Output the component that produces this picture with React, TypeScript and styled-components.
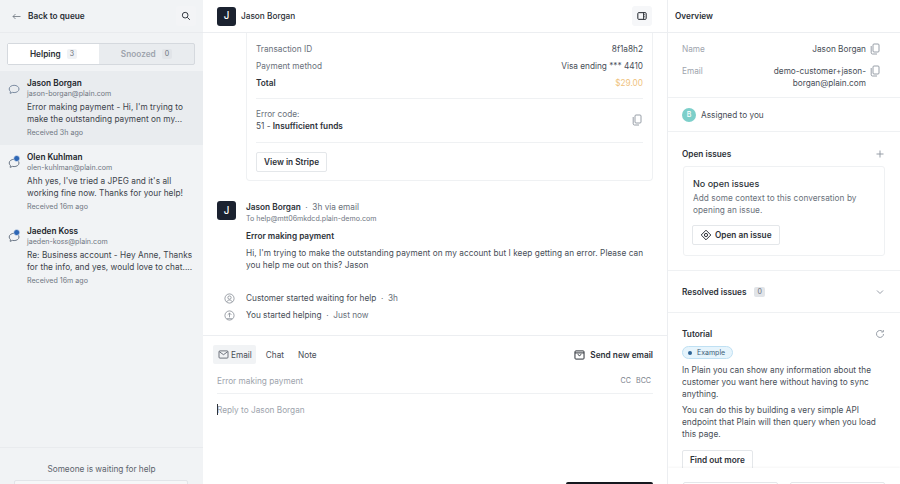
import React from "react";
import styled, { createGlobalStyle } from "styled-components";

const Global = createGlobalStyle`
  html, body { margin: 0; padding: 0; height: 484px; overflow: hidden; background: #fff; }
  body { font-family: Inter, "Liberation Sans", sans-serif; font-size: 8.25px; line-height: 12px; color: #2d3239; }
  * { box-sizing: border-box; }
  #root { height: 484px; }
`;

const Page = styled.div`
  display: grid;
  grid-template-columns: 203px 465px 232px;
  height: 484px;
  overflow: hidden;
`;

/* ---------- left ---------- */
const Left = styled.aside`
  background: #f1f3f5;
  display: flex;
  flex-direction: column;
  height: 484px;
`;
const LeftHeader = styled.div`
  height: 33px;
  flex: none;
  display: flex;
  align-items: center;
  padding: 0 7px 0 12px;
  gap: 7px;
  border-bottom: 1px solid #e9ebee;
  font-weight: 600;
  font-size: 8.25px;
  color: #2a2f36;
`;
const IconBtn = styled.div<{ $tone: string }>`
  width: 20px;
  height: 20px;
  margin-left: auto;
  display: flex;
  align-items: center;
  justify-content: center;
  border-radius: 3px;
  background: ${(p) => p.$tone};
  color: #343a42;
`;
const Tabs = styled.div`
  margin: 10px 8px 6px 7px;
  height: 22px;
  display: grid;
  grid-template-columns: 91px 1fr;
  border: 1px solid #d5d9de;
  border-radius: 2px;
  background: #e9ecef;
  flex: none;
`;
const Tab = styled.div<{ $active?: boolean }>`
  display: flex;
  align-items: center;
  justify-content: center;
  gap: 6px;
  font-weight: 600;
  font-size: 8.25px;
  color: ${(p) => (p.$active ? "#2a2f36" : "#9ea4ad")};
  background: ${(p) => (p.$active ? "#fff" : "transparent")};
`;
const Count = styled.span<{ $active?: boolean }>`
  min-width: 10px;
  height: 10px;
  padding: 0 3px;
  border-radius: 2px;
  display: inline-flex;
  align-items: center;
  justify-content: center;
  font-size: 7px;
  font-weight: 400;
  background: ${(p) => (p.$active ? "#f0f2f5" : "#e1e4e8")};
  color: #6a717b;
`;
const List = styled.div`
  flex: 1;
`;
const Item = styled.div<{ $selected?: boolean }>`
  height: 74px;
  padding: 6px 8px 0 27px;
  position: relative;
  background: ${(p) => (p.$selected ? "#e9ecef" : "transparent")};
`;
const ItemIcon = styled.svg`
  position: absolute;
  left: 8px;
  top: 12px;
  overflow: visible;
`;
const ItemName = styled.div`
  font-weight: 600;
  font-size: 8.25px;
  line-height: 12px;
  color: #22262c;
`;
const ItemEmail = styled.div`
  font-size: 7.1px;
  line-height: 10px;
  color: #6f7681;
  margin-bottom: 2px;
`;
const ItemText = styled.div`
  font-size: 8.25px;
  line-height: 12px;
  color: #3d434b;
  letter-spacing: 0.05px;
  white-space: nowrap;
`;
const ItemTime = styled.div`
  font-size: 7.1px;
  line-height: 13px;
  margin-top: 1px;
  color: #6f7681;
`;
const LeftFooter = styled.div`
  height: 37px;
  flex: none;
  border-top: 1px solid #e9ebee;
  padding-top: 15px;
  position: relative;
  text-align: center;
  font-size: 8.25px;
  color: #5d636d;
`;
const WaitButton = styled.div`
  position: absolute;
  left: 14px;
  right: 15px;
  top: 32px;
  height: 20px;
  background: #f6f7f8;
  border: 1px solid #e2e5e9;
  border-radius: 2px;
`;

/* ---------- main ---------- */
const Main = styled.main`
  display: flex;
  flex-direction: column;
  height: 484px;
  border-right: 1px solid #eceef1;
`;
const MainHeader = styled.div`
  height: 33px;
  flex: none;
  display: flex;
  align-items: center;
  gap: 5px;
  padding: 0 15px 0 14px;
  border-bottom: 1px solid #eceef1;
  font-weight: 500;
  font-size: 8.25px;
  color: #2a2f36;
`;
const Avatar = styled.div`
  width: 19px;
  height: 19px;
  flex: none;
  border-radius: 3px;
  background: #1b2230;
  color: #fff;
  display: flex;
  align-items: center;
  justify-content: center;
  font-weight: 500;
  font-size: 9.75px;
`;
const Feed = styled.div`
  height: 303px;
  flex: none;
  overflow: hidden;
  border-bottom: 1px solid #eceef1;
  padding: 0 14px;
`;
const Card = styled.div`
  margin-left: 29px;
  height: 148px;
  border: 1px solid #eff1f3;
  border-top: 0;
  border-radius: 0 0 4px 4px;
  padding: 8px 9px 0;
`;
const KV = styled.div`
  display: flex;
  justify-content: space-between;
  height: 17px;
  line-height: 17px;
  font-size: 8.25px;
  color: #6a717b;
`;
const KVValue = styled.span<{ $accent?: boolean }>`
  color: ${(p) => (p.$accent ? "#efc27d" : "#484e57")};
`;
const KVTotal = styled.span`
  font-weight: 600;
  color: #2d3239;
`;
const ErrorBlock = styled.div`
  margin-top: 6px;
  padding: 9px 0 10px;
  border-top: 1px solid #eff1f3;
  border-bottom: 1px solid #eff1f3;
  display: flex;
  justify-content: space-between;
  align-items: center;
  font-size: 8.25px;
  color: #6a717b;
`;
const ErrorLine = styled.div`
  color: #484e57;
  b { font-weight: 600; color: #2d3239; }
`;
const Ghost = styled.div`
  display: inline-flex;
  align-items: center;
  justify-content: center;
  gap: 3px;
  height: 20px;
  padding: 0 7px;
  border: 1px solid #e4e7ea;
  border-radius: 2px;
  background: #fff;
  font-weight: 600;
  font-size: 8.25px;
  color: #2d3239;
  white-space: nowrap;
`;
const StripeBtn = styled(Ghost)`
  margin-top: 9px;
`;
const Message = styled.div`
  display: flex;
  gap: 10px;
  margin-top: 20px;
`;
const MsgBody = styled.div`
  flex: 1;
`;
const MsgHead = styled.div`
  font-size: 8.25px;
  color: #6a717b;
  b { font-weight: 600; color: #2d3239; }
`;
const MsgTo = styled.div`
  font-size: 7.1px;
  line-height: 12px;
  color: #6f7681;
`;
const MsgTitle = styled.div`
  font-weight: 600;
  font-size: 8.25px;
  margin-top: 5px;
  color: #2d3239;
`;
const MsgText = styled.div`
  margin-top: 5px;
  font-size: 8.25px;
  color: #484e57;
  letter-spacing: 0.05px;
`;
const Events = styled.div`
  margin-top: 21px;
  display: flex;
  flex-direction: column;
  gap: 5px;
`;
const EventRow = styled.div`
  display: flex;
  align-items: center;
  height: 12px;
  font-size: 8.25px;
  color: #484e57;
  svg { margin: 0 11px 0 7px; color: #7a818b; }
  span { color: #6a717b; }
`;
const Composer = styled.div`
  flex: 1;
  padding: 9px 14px 0 10px;
  position: relative;
  overflow: hidden;
`;
const ComposerTabs = styled.div`
  display: flex;
  align-items: center;
  height: 19px;
  font-size: 8.25px;
  color: #484e57;
`;
const ComposerTab = styled.div<{ $active?: boolean }>`
  display: flex;
  align-items: center;
  gap: 2px;
  height: 19px;
  padding: 0 4px 0 5px;
  margin-right: 5px;
  border-radius: 2px;
  background: ${(p) => (p.$active ? "#f1f3f5" : "transparent")};
`;
const SendNew = styled.div`
  margin-left: auto;
  display: flex;
  align-items: center;
  gap: 5px;
  font-weight: 600;
  color: #2d3239;
`;
const Subject = styled.div`
  margin: 2px 0 0 4px;
  height: 28px;
  border-bottom: 1px solid #eff1f3;
  display: flex;
  align-items: center;
  justify-content: space-between;
  font-size: 8.25px;
  color: #9ea4ad;
  padding-top: 3px;
`;
const CcBcc = styled.div`
  display: flex;
  gap: 5px;
  font-size: 7.1px;
  color: #7a818b;
  padding-right: 2px;
`;
const Reply = styled.div`
  margin: 10px 0 0 4px;
  font-size: 8.25px;
  color: #9ea4ad;
  position: relative;
  &::before {
    content: "";
    position: absolute;
    left: 0;
    top: 0;
    width: 1px;
    height: 11px;
    background: #2d3239;
  }
`;
const Send = styled.div`
  position: absolute;
  right: 14px;
  top: 146px;
  width: 87px;
  height: 20px;
  border-radius: 2px;
  background: #15191f;
`;

/* ---------- right ---------- */
const Right = styled.aside`
  display: flex;
  flex-direction: column;
  height: 484px;
  overflow: hidden;
  position: relative;
`;
const RightHeader = styled.div`
  height: 33px;
  flex: none;
  display: flex;
  align-items: center;
  padding-left: 7px;
  border-bottom: 1px solid #eceef1;
  font-weight: 600;
  font-size: 8.25px;
  color: #2a2f36;
`;
const Section = styled.div<{ $h: number; $top?: number; $last?: boolean }>`
  height: ${(p) => p.$h}px;
  flex: none;
  padding: ${(p) => p.$top ?? 0}px 15px 0 14px;
  border-bottom: ${(p) => (p.$last ? "0" : "1px solid #eff1f3")};
`;
const FieldSection = styled(Section)`
  padding-right: 19px;
`;
const Field = styled.div`
  display: flex;
  gap: 3px;
  font-size: 8.25px;
  color: #9ea4ad;
  margin-bottom: 10px;
`;
const FieldValue = styled.div`
  margin-left: auto;
  width: 102px;
  text-align: right;
  color: #484e57;
`;
const CopyWrap = styled.div`
  display: flex;
  width: 12px;
  flex: none;
  color: #8d949e;
`;
const Assigned = styled.div`
  height: 100%;
  display: flex;
  align-items: center;
  gap: 5px;
  font-size: 8.25px;
  color: #484e57;
`;
const Dot = styled.div`
  width: 14px;
  height: 14px;
  border-radius: 50%;
  background: #7ccfca;
  color: #fff;
  font-size: 7px;
  font-weight: 500;
  display: flex;
  align-items: center;
  justify-content: center;
`;
const SecHead = styled.div`
  display: flex;
  align-items: center;
  justify-content: space-between;
  height: 12px;
  font-weight: 600;
  font-size: 8.25px;
  color: #2d3239;
  svg { color: #8d949e; }
`;
const SecTitle = styled.div`
  display: flex;
  align-items: center;
  gap: 8px;
`;
const IssueBox = styled.div`
  margin: 6px 0 0 1px;
  height: 90px;
  border: 1px solid #eff1f3;
  border-radius: 3px;
  padding: 10px 9px 0 8px;
`;
const IssueTitle = styled.div`
  font-size: 9px;
  font-weight: 500;
  line-height: 13px;
  margin-left: 1px;
  color: #2d3239;
`;
const IssueText = styled.div`
  margin: 2px 0 0 1px;
  font-size: 8.25px;
  color: #6a717b;
  letter-spacing: 0.05px;
`;
const IssueBtn = styled(Ghost)`
  margin-top: 9px;
`;
const Chip = styled.div`
  margin: 6px 0 5px;
  width: fit-content;
  display: flex;
  align-items: center;
  gap: 5px;
  height: 13px;
  padding: 0 7px 0 5px;
  border-radius: 7px;
  border: 1px solid #bfe0f3;
  background: #e6f4fc;
  font-size: 7px;
  color: #3c5d78;
  &::before {
    content: "";
    width: 4px;
    height: 4px;
    border-radius: 50%;
    background: #2f6496;
  }
`;
const TutText = styled.div`
  font-size: 8.25px;
  color: #484e57;
  letter-spacing: 0.05px;
  & + & { margin-top: 4px; }
`;
const TutBtn = styled(Ghost)`
  margin-top: 10px;
`;
const RightFooter = styled.div`
  position: absolute;
  left: 0;
  right: 0;
  top: 468px;
  height: 16px;
  background: #fff;
  box-shadow: 0 -1px 2px rgba(0, 0, 0, 0.04);
  display: grid;
  grid-template-columns: 95px 95px;
  gap: 12px;
  padding: 14px 15px 0;
`;
const FootBtn = styled.div`
  height: 20px;
  border: 1px solid #e4e7ea;
  border-radius: 2px;
`;

/* ---------- icons ---------- */
const Copy = () => (
  <svg width="12" height="12" viewBox="0 0 12 12" fill="none" stroke="currentColor" strokeWidth="0.9">
    <rect x="4" y="1" width="6" height="8" rx="1" />
    <path d="M2.2 3v6.8c0 .7.5 1.2 1.2 1.2H8" />
  </svg>
);
const Bubble = ({ dot }: { dot?: boolean }) => (
  <ItemIcon width="14" height="12" viewBox="0 0 14 12" fill="none">
    <path
      d="M1.200 6c0-2.200 2.300-3.700 4.900-3.700S11 3.800 11 6 8.700 9.600 6.100 9.600c-.6 0-1.200-.1-1.700-.2L2.200 10.400l.2-2A3.200 3.200 0 0 1 1.200 6z"
      stroke={dot ? "#5d6a7b" : "#6d7f96"}
      strokeWidth="0.9"
    />
    {dot && <circle cx="8.700" cy="1.500" r="3" fill="#2d66b5" stroke="#f1f3f5" strokeWidth="0.6" />}
  </ItemIcon>
);
const Person = () => (
  <svg width="11" height="11" viewBox="0 0 12 12" fill="none" stroke="currentColor" strokeWidth="0.8">
    <circle cx="6" cy="6" r="5" />
    <circle cx="6" cy="5" r="1.800" />
    <path d="M3 9.600c.6-1.300 1.700-1.900 3-1.900s2.400.6 3 1.900" />
  </svg>
);
const PersonUp = () => (
  <svg width="11" height="11" viewBox="0 0 12 12" fill="none" stroke="currentColor" strokeWidth="0.8">
    <circle cx="6" cy="6" r="5" />
    <path d="M6 8V3.400M4 5.300l2-2 2 2M3 9.500h6" />
  </svg>
);

const items = [
  {
    name: "Jason Borgan",
    email: "jason-borgan@plain.com",
    lines: ["Error making payment - Hi, I'm trying to", "make the outstanding payment on my..."],
    time: "Received 3h ago",
    selected: true,
  },
  {
    name: "Olen Kuhlman",
    email: "olen-kuhlman@plain.com",
    lines: ["Ahh yes, I've tried a JPEG and it's all", "working fine now. Thanks for your help!"],
    time: "Received 16m ago",
    dot: true,
  },
  {
    name: "Jaeden Koss",
    email: "jaeden-koss@plain.com",
    lines: ["Re: Business account - Hey Anne, Thanks", "for the info, and yes, would love to chat...."],
    time: "Received 16m ago",
    dot: true,
  },
];

export default function App() {
  return (
    <Page>
      <Global />
      <Left>
        <LeftHeader>
          <svg width="9" height="9" viewBox="0 0 9 9" fill="none" stroke="#6a717b" strokeWidth="0.8">
            <path d="M8.500 4.500H1M3.500 2 1 4.500 3.500 7" />
          </svg>
          Back to queue
          <IconBtn $tone="#f3f4f6">
            <svg width="10" height="10" viewBox="0 0 12 12" fill="none" stroke="currentColor" strokeWidth="1.200">
              <circle cx="5" cy="5" r="3.400" />
              <path d="m7.600 7.600 3 3" />
            </svg>
          </IconBtn>
        </LeftHeader>
        <Tabs>
          <Tab $active>
            Helping <Count $active>3</Count>
          </Tab>
          <Tab>
            Snoozed <Count>0</Count>
          </Tab>
        </Tabs>
        <List>
          {items.map((it) => (
            <Item key={it.name} $selected={it.selected}>
              <Bubble dot={it.dot} />
              <ItemName>{it.name}</ItemName>
              <ItemEmail>{it.email}</ItemEmail>
              {it.lines.map((l) => (
                <ItemText key={l}>{l}</ItemText>
              ))}
              <ItemTime>{it.time}</ItemTime>
            </Item>
          ))}
        </List>
        <LeftFooter>
          Someone is waiting for help
          <WaitButton />
        </LeftFooter>
      </Left>

      <Main>
        <MainHeader>
          <Avatar>J</Avatar>
          Jason Borgan
          <IconBtn $tone="#f6f7f9">
            <svg width="10" height="10" viewBox="0 0 12 12" fill="none" stroke="#1f242b" strokeWidth="1.200">
              <rect x="1" y="2" width="10" height="8" rx="1" />
              <path d="M7.800 2v8M9.500 4.500H7.800M9.500 7H7.800" strokeWidth="1" />
            </svg>
          </IconBtn>
        </MainHeader>
        <Feed>
          <Card>
            <KV>
              Transaction ID <KVValue>8f1a8h2</KVValue>
            </KV>
            <KV>
              Payment method <KVValue>Visa ending *** 4410</KVValue>
            </KV>
            <KV>
              <KVTotal>Total</KVTotal> <KVValue $accent>$29.00</KVValue>
            </KV>
            <ErrorBlock>
              <div>
                Error code:
                <ErrorLine>
                  51 - <b>Insufficient funds</b>
                </ErrorLine>
              </div>
              <CopyWrap>
                <Copy />
              </CopyWrap>
            </ErrorBlock>
            <StripeBtn>View in Stripe</StripeBtn>
          </Card>
          <Message>
            <Avatar>J</Avatar>
            <MsgBody>
              <MsgHead>
                <b>Jason Borgan</b> &nbsp;·&nbsp; 3h via email
              </MsgHead>
              <MsgTo>To help@mtt06mkdcd.plain-demo.com</MsgTo>
              <MsgTitle>Error making payment</MsgTitle>
              <MsgText>
                Hi, I'm trying to make the outstanding payment on my account but I keep getting an error. Please can
                you help me out on this? Jason
              </MsgText>
            </MsgBody>
          </Message>
          <Events>
            <EventRow>
              <Person />
              Customer started waiting for help &nbsp;<span>·&nbsp; 3h</span>
            </EventRow>
            <EventRow>
              <PersonUp />
              You started helping &nbsp;<span>·&nbsp; Just now</span>
            </EventRow>
          </Events>
        </Feed>
        <Composer>
          <ComposerTabs>
            <ComposerTab $active>
              <svg width="11" height="9" viewBox="0 0 12 10" fill="none" stroke="#4f5660" strokeWidth="0.9">
                <rect x="1" y="1" width="10" height="8" rx="1" />
                <path d="m1.500 2 4.500 3.200L10.500 2" />
              </svg>
              Email
            </ComposerTab>
            <ComposerTab>Chat</ComposerTab>
            <ComposerTab>Note</ComposerTab>
            <SendNew>
              <svg width="11" height="10" viewBox="0 0 12 11" fill="none" stroke="#2d3239" strokeWidth="1.100">
                <rect x="1" y="1" width="10" height="9" rx="1" />
                <path d="M1 3.200h10M4 4.800l2 1.400 2-1.400" />
              </svg>
              Send new email
            </SendNew>
          </ComposerTabs>
          <Subject>
            Error making payment
            <CcBcc>
              <span>CC</span>
              <span>BCC</span>
            </CcBcc>
          </Subject>
          <Reply>Reply to Jason Borgan</Reply>
          <Send />
        </Composer>
      </Main>

      <Right>
        <RightHeader>Overview</RightHeader>
        <FieldSection $h={65} $top={10}>
          <Field>
            Name
            <FieldValue>Jason Borgan</FieldValue>
            <CopyWrap>
              <Copy />
            </CopyWrap>
          </Field>
          <Field>
            Email
            <FieldValue>demo-customer+jason-borgan@plain.com</FieldValue>
            <CopyWrap>
              <Copy />
            </CopyWrap>
          </Field>
        </FieldSection>
        <Section $h={34}>
          <Assigned>
            <Dot>B</Dot>
            Assigned to you
          </Assigned>
        </Section>
        <Section $h={139} $top={16}>
          <SecHead>
            Open issues
            <svg width="10" height="10" viewBox="0 0 10 10" fill="none" stroke="currentColor" strokeWidth="0.9">
              <path d="M5 1.500v7M1.500 5h7" />
            </svg>
          </SecHead>
          <IssueBox>
            <IssueTitle>No open issues</IssueTitle>
            <IssueText>Add some context to this conversation by opening an issue.</IssueText>
            <IssueBtn>
              <svg width="12" height="12" viewBox="0 0 12 12" fill="none" stroke="#2d3239" strokeWidth="1">
                <path d="M6 1.200 10.800 6 6 10.800 1.200 6z" />
                <circle cx="6" cy="6" r="1.600" />
              </svg>
              Open an issue
            </IssueBtn>
          </IssueBox>
        </Section>
        <Section $h={42} $top={15}>
          <SecHead>
            <SecTitle>
              Resolved issues <Count>0</Count>
            </SecTitle>
            <svg width="10" height="10" viewBox="0 0 10 10" fill="none" stroke="currentColor" strokeWidth="0.9">
              <path d="m2 3.500 3 3 3-3" />
            </svg>
          </SecHead>
        </Section>
        <Section $h={155} $top={15} $last>
          <SecHead>
            Tutorial
            <svg width="10" height="10" viewBox="0 0 10 10" fill="none" stroke="currentColor" strokeWidth="0.9">
              <path d="M8.500 5A3.500 3.500 0 1 1 7.400 2.400M8.300 1v2H6.300" />
            </svg>
          </SecHead>
          <Chip>Example</Chip>
          <TutText>In Plain you can show any information about the customer you want here without having to sync anything.</TutText>
          <TutText>You can do this by building a very simple API endpoint that Plain will then query when you load this page.</TutText>
          <TutBtn>Find out more</TutBtn>
        </Section>
        <RightFooter>
          <FootBtn />
          <FootBtn />
        </RightFooter>
      </Right>
    </Page>
  );
}
